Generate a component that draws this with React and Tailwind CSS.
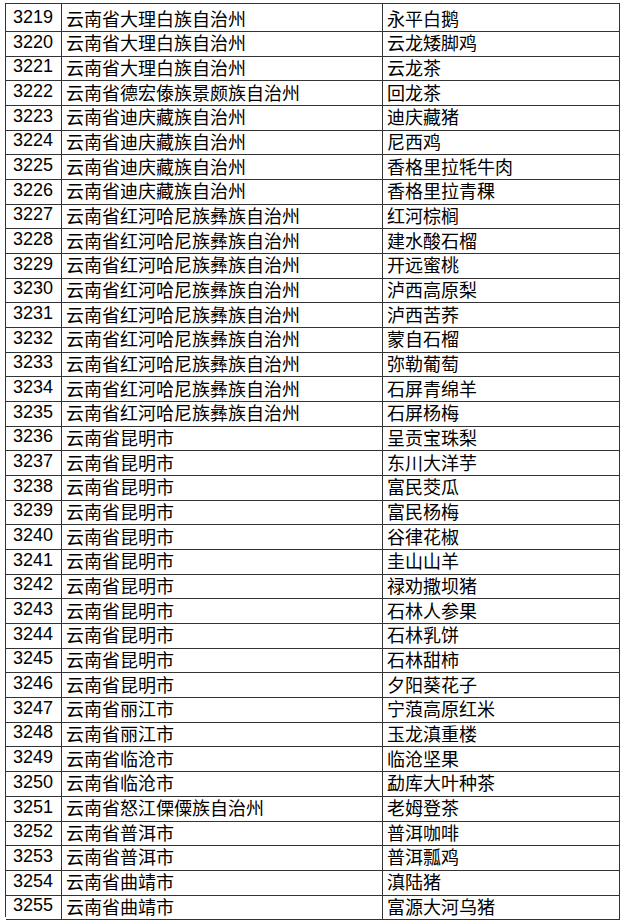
const rows = [
  ['3219', '云南省大理白族自治州', '永平白鹅'],
  ['3220', '云南省大理白族自治州', '云龙矮脚鸡'],
  ['3221', '云南省大理白族自治州', '云龙茶'],
  ['3222', '云南省德宏傣族景颇族自治州', '回龙茶'],
  ['3223', '云南省迪庆藏族自治州', '迪庆藏猪'],
  ['3224', '云南省迪庆藏族自治州', '尼西鸡'],
  ['3225', '云南省迪庆藏族自治州', '香格里拉牦牛肉'],
  ['3226', '云南省迪庆藏族自治州', '香格里拉青稞'],
  ['3227', '云南省红河哈尼族彝族自治州', '红河棕榈'],
  ['3228', '云南省红河哈尼族彝族自治州', '建水酸石榴'],
  ['3229', '云南省红河哈尼族彝族自治州', '开远蜜桃'],
  ['3230', '云南省红河哈尼族彝族自治州', '泸西高原梨'],
  ['3231', '云南省红河哈尼族彝族自治州', '泸西苦荞'],
  ['3232', '云南省红河哈尼族彝族自治州', '蒙自石榴'],
  ['3233', '云南省红河哈尼族彝族自治州', '弥勒葡萄'],
  ['3234', '云南省红河哈尼族彝族自治州', '石屏青绵羊'],
  ['3235', '云南省红河哈尼族彝族自治州', '石屏杨梅'],
  ['3236', '云南省昆明市', '呈贡宝珠梨'],
  ['3237', '云南省昆明市', '东川大洋芋'],
  ['3238', '云南省昆明市', '富民茭瓜'],
  ['3239', '云南省昆明市', '富民杨梅'],
  ['3240', '云南省昆明市', '谷律花椒'],
  ['3241', '云南省昆明市', '圭山山羊'],
  ['3242', '云南省昆明市', '禄劝撒坝猪'],
  ['3243', '云南省昆明市', '石林人参果'],
  ['3244', '云南省昆明市', '石林乳饼'],
  ['3245', '云南省昆明市', '石林甜柿'],
  ['3246', '云南省昆明市', '夕阳葵花子'],
  ['3247', '云南省丽江市', '宁蒗高原红米'],
  ['3248', '云南省丽江市', '玉龙滇重楼'],
  ['3249', '云南省临沧市', '临沧坚果'],
  ['3250', '云南省临沧市', '勐库大叶种茶'],
  ['3251', '云南省怒江傈僳族自治州', '老姆登茶'],
  ['3252', '云南省普洱市', '普洱咖啡'],
  ['3253', '云南省普洱市', '普洱瓢鸡'],
  ['3254', '云南省曲靖市', '滇陆猪'],
  ['3255', '云南省曲靖市', '富源大河乌猪'],
];

export default function App() {
  return (
    <div className="min-h-screen bg-white pt-[3px] pl-[5px]">
      <div className="w-[615px] border-t border-l border-[#333] text-[18px] text-black">
        {rows.map(([no, region, product]) => (
          <div key={no} className="grid grid-cols-[56px_321px_237px] h-[24.68px]">
            <div className="flex items-center pl-[7px] border-r border-b border-[#333] font-['Liberation_Sans',Arial,sans-serif]">
              {no}
            </div>
            <div className="flex items-center pl-[4px] border-r border-b border-[#333] font-['Noto_Sans_CJK_SC',sans-serif] leading-none">
              {region}
            </div>
            <div className="flex items-center pl-[4px] border-r border-b border-[#333] font-['Noto_Sans_CJK_SC',sans-serif] leading-none">
              {product}
            </div>
          </div>
        ))}
      </div>
    </div>
  );
}
